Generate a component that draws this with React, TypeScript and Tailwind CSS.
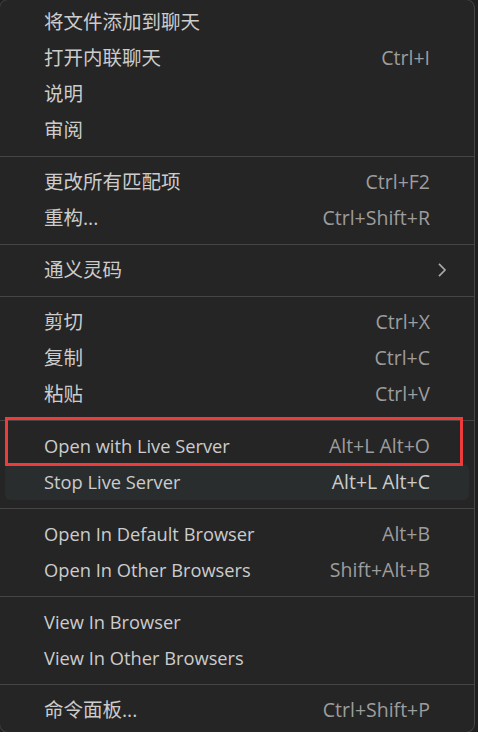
import React from 'react';

type Item =
  | { kind: 'item'; label: string; shortcut?: string; submenu?: boolean; hover?: boolean; outlined?: boolean }
  | { kind: 'sep' };

const items: Item[] = [
  { kind: 'item', label: '将文件添加到聊天' },
  { kind: 'item', label: '打开内联聊天', shortcut: 'Ctrl+I' },
  { kind: 'item', label: '说明' },
  { kind: 'item', label: '审阅' },
  { kind: 'sep' },
  { kind: 'item', label: '更改所有匹配项', shortcut: 'Ctrl+F2' },
  { kind: 'item', label: '重构...', shortcut: 'Ctrl+Shift+R' },
  { kind: 'sep' },
  { kind: 'item', label: '通义灵码', submenu: true },
  { kind: 'sep' },
  { kind: 'item', label: '剪切', shortcut: 'Ctrl+X' },
  { kind: 'item', label: '复制', shortcut: 'Ctrl+C' },
  { kind: 'item', label: '粘贴', shortcut: 'Ctrl+V' },
  { kind: 'sep' },
  { kind: 'item', label: 'Open with Live Server', shortcut: 'Alt+L Alt+O', outlined: true },
  { kind: 'item', label: 'Stop Live Server', shortcut: 'Alt+L Alt+C', hover: true },
  { kind: 'sep' },
  { kind: 'item', label: 'Open In Default Browser', shortcut: 'Alt+B' },
  { kind: 'item', label: 'Open In Other Browsers', shortcut: 'Shift+Alt+B' },
  { kind: 'sep' },
  { kind: 'item', label: 'View In Browser' },
  { kind: 'item', label: 'View In Other Browsers' },
  { kind: 'sep' },
  { kind: 'item', label: '命令面板...', shortcut: 'Ctrl+Shift+P' },
];

const isCjk = (s: string) => /[\u4e00-\u9fff]/.test(s);

const MenuRow: React.FC<{ item: Extract<Item, { kind: 'item' }> }> = ({ item }) => (
  <div
    className={`relative mx-[5px] flex h-[36px] items-center rounded-[6px] pl-[39px] pr-[39px] ${
      item.hover ? 'bg-[#2a2d2e]' : ''
    }`}
  >
    <span
      className={`flex-1 whitespace-nowrap text-[#cccccc] ${
        isCjk(item.label) ? 'text-[19.5px]' : 'text-[18.3px]'
      }`}
    >
      {item.label}
    </span>
    {item.shortcut && (
      <span className={`whitespace-nowrap ${item.hover ? 'text-[#cccccc]' : 'text-[#9d9d9d]'}`}>
        {item.shortcut}
      </span>
    )}
    {item.submenu && (
      <svg
        className="absolute right-[22px] top-1/2 -translate-y-1/2"
        width="10"
        height="16"
        viewBox="0 0 10 16"
        fill="none"
        stroke="#a8a8a8"
        strokeWidth="1.7"
      >
        <path d="M2 1.8 L8 8 L2 14.2" />
      </svg>
    )}
    {item.outlined && (
      <div className="pointer-events-none absolute left-0 right-[6px] top-[-11px] bottom-[-2px] z-10 border-[3px] border-[#ee3b3b]" />
    )}
  </div>
);

export default function App() {
  return (
    <div
      className="h-[732px] w-[478px] overflow-hidden bg-[#1f1f1f] text-[19.5px] leading-[36px]"
      style={{ fontFamily: '"Segoe UI", "Open Sans", "Noto Sans CJK SC", sans-serif' }}
    >
      <div className="-ml-px -mt-px w-[476px] rounded-[9px] border border-[#454545] bg-[#252526] pt-[4px] pb-[4px]">
        {items.map((item, i) =>
          item.kind === 'sep' ? (
            <div key={i} className="flex h-[16px] items-center">
              <div className="h-px w-full bg-[#454545]" />
            </div>
          ) : (
            <MenuRow key={i} item={item} />
          )
        )}
      </div>
    </div>
  );
}
